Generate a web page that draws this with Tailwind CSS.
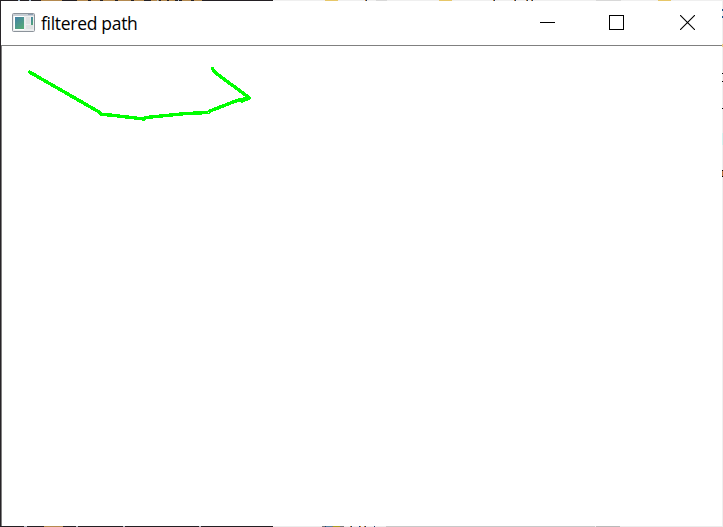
<!DOCTYPE html>
<html lang="en">
<head>
<meta charset="utf-8">
<title>filtered path</title>
<script src="https://cdn.jsdelivr.net/npm/@tailwindcss/browser@4"></script>
</head>
<body class="w-[723px] h-[527px] overflow-hidden bg-white flex flex-col">
  <!-- desktop visible above the window -->
  <svg class="block w-full h-px shrink-0" viewBox="0 0 723 1" shape-rendering="crispEdges">
    <path fill="#efefef" d="M0 0h723v1H0z"/><path fill="#231f23" d="M0 0h273v1H0z"/>
    <path stroke="#b48a50" d="M41 .5h21M77 .5h11M91 .5h9M103 .5h12M118 .5h13M134 .5h10M151 .5h8M161 .5h6M169 .5h6M182 .5h9M194 .5h8"/>
    <path stroke="#a9bfd0" d="M18 .5h2M29 .5h2M157 .5h1M178 .5h1"/>
    <path stroke="#e7c769" d="M325 .5h13M439 .5h13M658 .5h13"/>
    <path stroke="#d8d8d8" d="M376 .5h11M596 .5h25"/>
    <path stroke="#173c73" d="M366 .5h1M494 .5h1M515 .5h1M527 .5h1M532 .5h1"/>
    <path stroke="#c77b26" d="M365 .5h1M493 .5h1M514 .5h1M526 .5h1M531 .5h1"/>
  </svg>
  <div class="flex flex-1 min-h-0">
    <div class="w-px bg-[#272327] shrink-0"></div>
    <main class="flex flex-col flex-1 min-w-0">
      <header class="h-11 flex items-center pl-[11px] bg-white shrink-0">
        <svg class="block w-[23px] h-[19px] -mt-0.5 shrink-0" viewBox="0 0 23 19">
          <defs><linearGradient id="pane" x1="0" y1="0" x2=".7" y2="1"><stop stop-color="#4380a8"/><stop offset="1" stop-color="#54a878"/></linearGradient></defs>
          <rect x=".5" y=".5" width="22" height="18" rx="1" fill="#eceeef" stroke="#8c939b"/>
          <path fill="#c7ced4" d="M1 1h21v2H1z"/><path fill="#8fa0b5" d="M16 1h5v1h-5z"/>
          <path fill="#fff" d="M2 3h10v14H2z"/>
          <rect x="3" y="4" width="9" height="12" fill="url(#pane)"/>
          <path fill="#dfe2e2" d="M14 4h4v7h-4zM14 12h7v4h-7z"/>
          <rect x="19" y="4" width="2" height="8" fill="url(#pane)"/>
        </svg>
        <h1 class="ml-1.5 text-[17.5px] leading-6 tracking-[-0.017em] text-black whitespace-nowrap font-['Open_Sans','Noto_Sans',sans-serif]">filtered path</h1>
        <div class="ml-auto flex items-center pr-[27px] gap-[54px] -mt-px">
          <svg class="block w-[15px] h-[15px]" viewBox="0 0 15 15" shape-rendering="crispEdges"><path stroke="#000" d="M0 7.5h15"/></svg>
          <svg class="block w-[15px] h-[15px]" viewBox="0 0 15 15" shape-rendering="crispEdges"><path fill="none" stroke="#000" d="M.5.5h14v14H.5z"/></svg>
          <svg class="block w-[15px] h-[15px] ml-0.5" viewBox="0 0 15 15"><path stroke="#000" stroke-width="1.1" d="M0 0l15 15M15 0L0 15"/></svg>
        </div>
      </header>
      <section class="flex-1 min-h-0 border-t border-l border-[#808080] bg-white">
        <svg class="block w-[300px] h-[100px]" viewBox="2 46 300 100" shape-rendering="crispEdges">
          <path fill="none" stroke="#00ff00" stroke-width="3.4" stroke-linecap="round" stroke-linejoin="round" d="M29.500 72L100 112.500L101.500 114.500L110 115L144 119L146 117.500L186 113.500L208.500 112.500L210 111L237 100.500L249.500 98L214.500 72L212.500 68.500M242 101L249.500 98"/>
        </svg>
      </section>
    </main>
    <!-- desktop visible right of the window -->
    <svg class="block w-px h-full shrink-0" viewBox="0 1 1 525" shape-rendering="crispEdges">
      <path fill="#efefef" d="M0 1h1v525H0z"/>
      <path stroke="#18548c" d="M.5 9v2M.5 16v2"/><path stroke="#f0cf80" d="M.5 44v3"/>
      <path stroke="#000" d="M.5 73v1M.5 81v1M.5 108v1M.5 170v1M.5 176v1"/>
      <path stroke="#d2f1ee" d="M.5 133v12"/><path stroke="#b87034" d="M.5 171v5"/>
    </svg>
  </div>
  <!-- desktop visible below the window -->
  <svg class="block w-full h-px shrink-0" viewBox="0 0 723 1" shape-rendering="crispEdges">
    <path fill="#ececec" d="M0 0h723v1H0z"/><path fill="#231f23" d="M0 0h273v1H0z"/>
    <path stroke="#b48a50" d="M44 .5h19"/><path stroke="#b5bdc5" d="M24 .5h3M76 .5h2M123 .5h2M199 .5h2"/>
    <path stroke="#777" d="M322 .5h22"/><path stroke="#5683a0" d="M326 .5h6"/><path stroke="#a99c20" d="M333 .5h7"/>
    <path stroke="#173c73" d="M325 .5h1M351 .5h1M359 .5h1M365 .5h1M374 .5h1"/>
    <path stroke="#c77b26" d="M350 .5h1M360 .5h1M364 .5h1"/>
    <path stroke="#c8c8c8" d="M386 .5h209"/><path stroke="#b9b9b9" d="M596 .5h24"/>
  </svg>
</body>
</html>
